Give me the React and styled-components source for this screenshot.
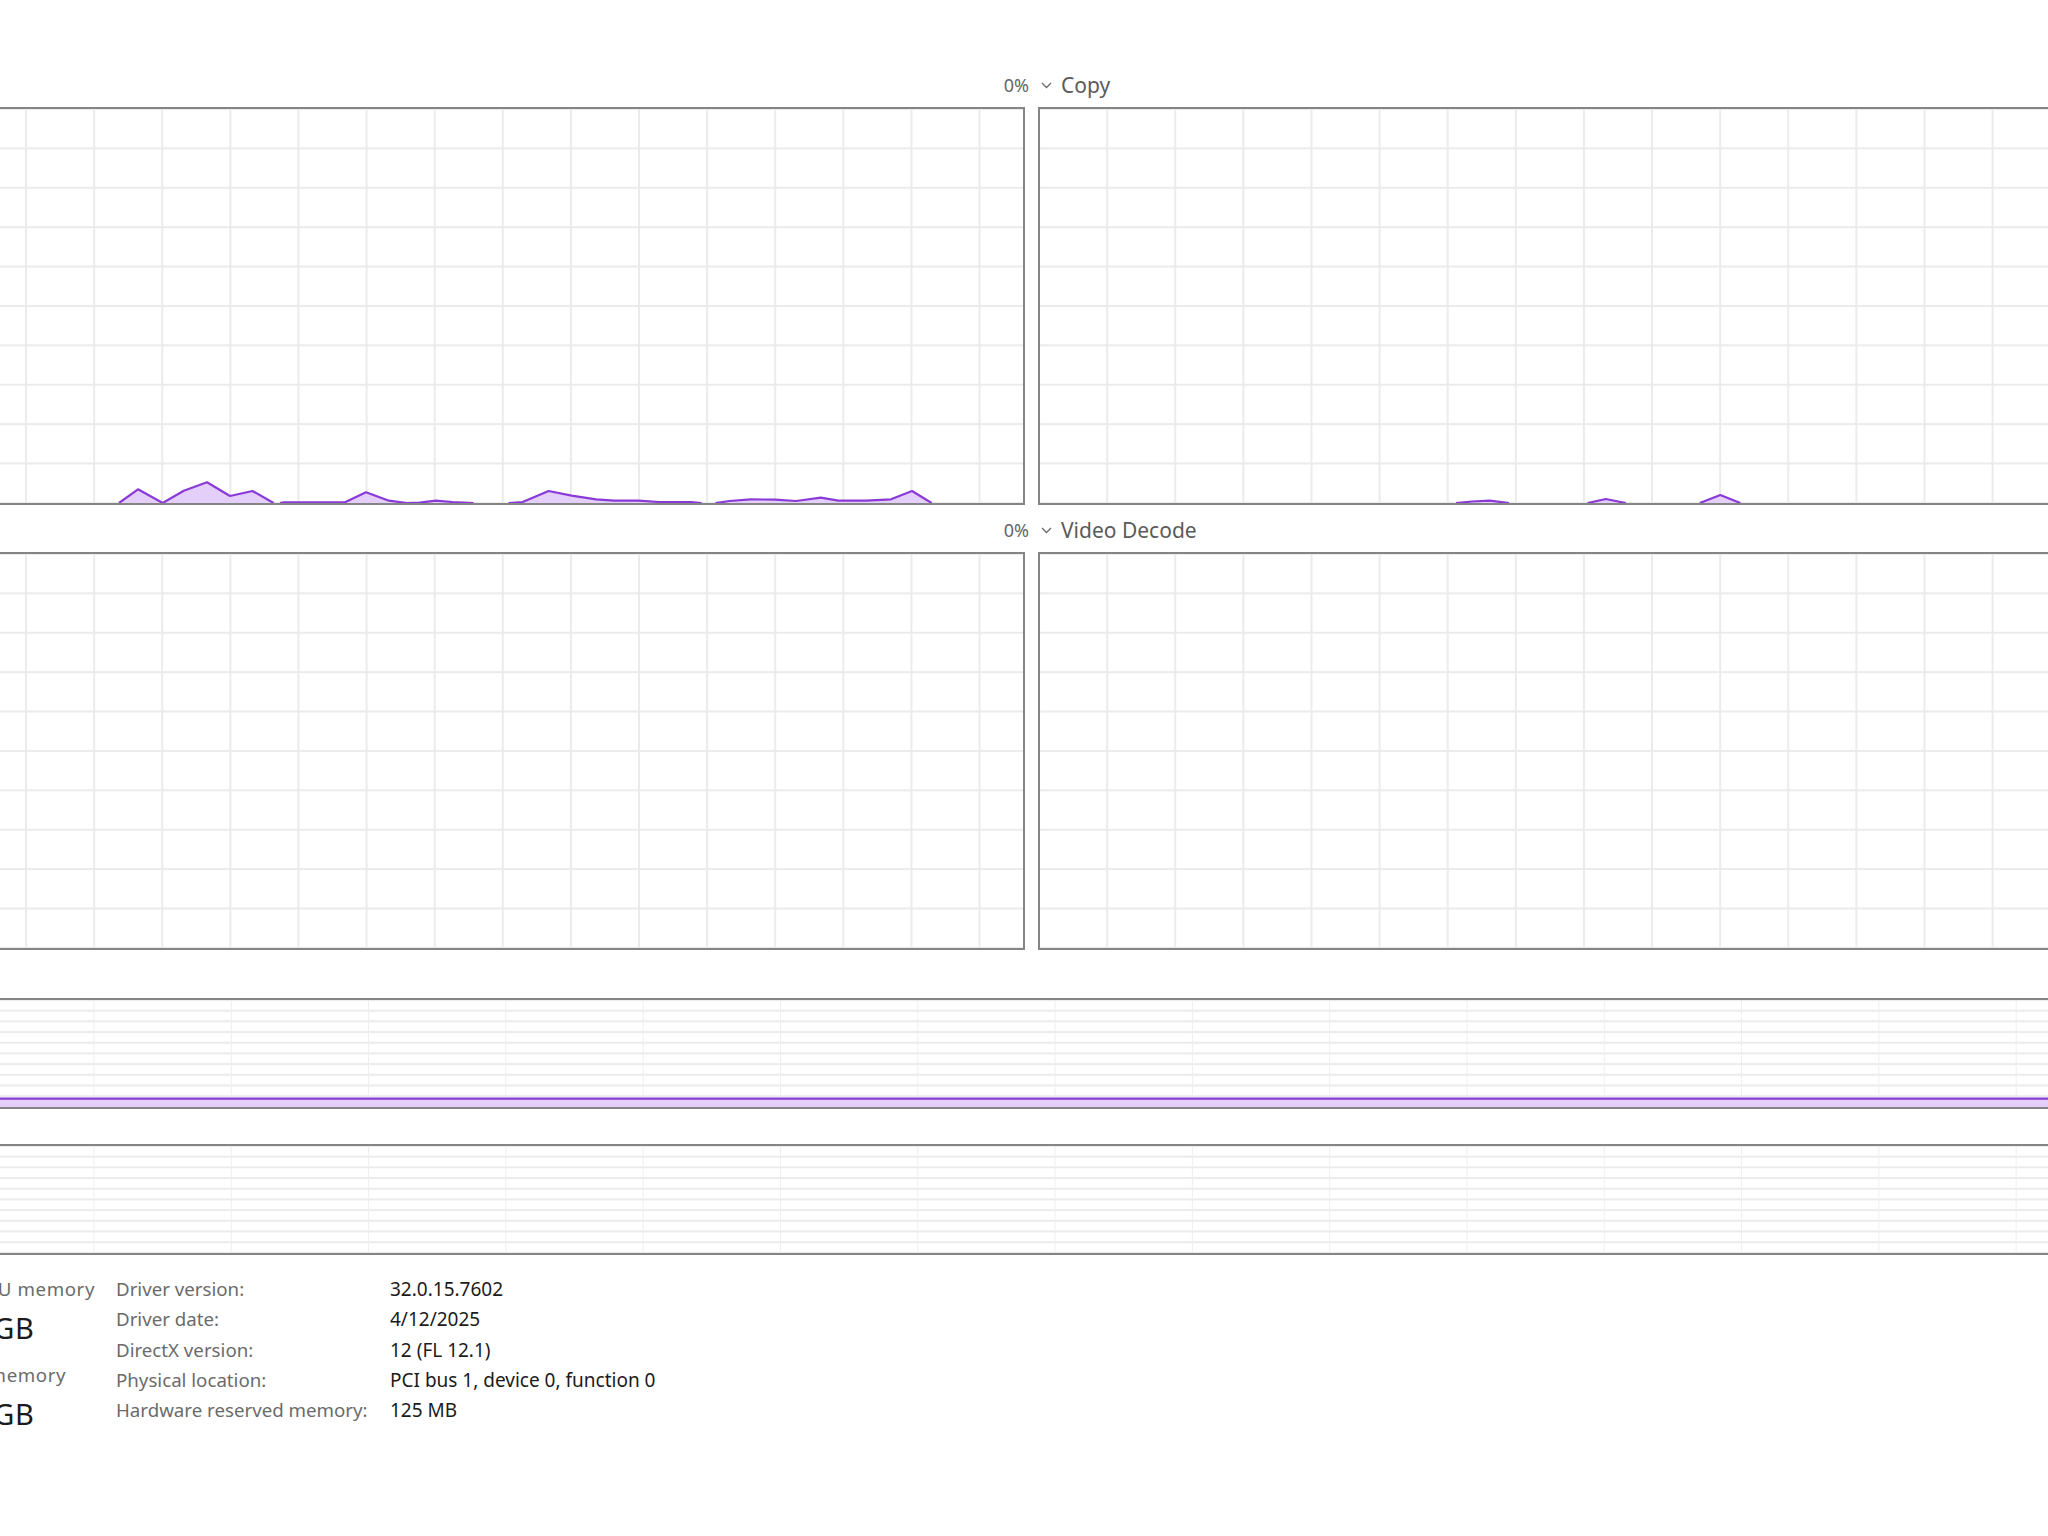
import React from "react";
import styled, { createGlobalStyle } from "styled-components";

const GlobalStyle = createGlobalStyle`
  html, body {
    margin: 0;
    padding: 0;
    background: #ffffff;
  }
  body {
    font-family: "Noto Sans", "Open Sans", sans-serif;
    color: #1b1b1b;
  }
`;

const Viewport = styled.div`
  width: 2048px;
  height: 1536px;
  overflow: hidden;
  background: #ffffff;
`;

// the panel is wider than the window, its left part is scrolled out of view
const Panel = styled.div`
  margin-left: -260px;
  width: 2583px;
  padding-top: 63px;
  display: flex;
  flex-direction: column;
`;

const EngineGrid = styled.div`
  display: grid;
  grid-template-columns: 1285px 1285px;
  column-gap: 13px;
  row-gap: 3px;
`;

const EngineCell = styled.div`
  display: flex;
  flex-direction: column;
`;

const EngineHeader = styled.div`
  height: 44px;
  display: flex;
  align-items: center;
  justify-content: space-between;
`;

const EngineName = styled.div`
  display: flex;
  align-items: center;
  gap: 9px;
  padding-left: 3px;
  font-size: 21px;
  color: #5b5b5b;
  svg {
    display: block;
  }
`;

const Percent = styled.div`
  font-size: 18px;
  color: #666666;
  margin-right: -4px;
`;

const ChartBox = styled.div`
  box-sizing: border-box;
  height: ${(p) => p.$height}px;
  border: 2px solid #858585;
  background-color: #ffffff;
  background-image: linear-gradient(
      to right,
      ${(p) => p.$vColor} ${(p) => p.$vWidth}px,
      transparent ${(p) => p.$vWidth}px
    ),
    linear-gradient(to bottom, #ebebeb 2px, transparent 2px);
  background-size: ${(p) => p.$colW}px 100%, 100% ${(p) => p.$rowH}px;
  background-position: ${(p) => p.$offX}px 0, 0 ${(p) => p.$offY}px;
  svg {
    display: block;
    width: 100%;
    height: 100%;
  }
`;

const MemSection = styled.div`
  margin-top: 13px;
  display: flex;
  flex-direction: column;
`;

const MemHeader = styled.div`
  height: 35px;
  display: flex;
  align-items: center;
  justify-content: space-between;
  font-size: 15px;
  color: #666666;
`;

const Stats = styled.div`
  margin-top: 19px;
  display: grid;
  grid-template-columns: 132px 244px 274px auto;
  align-items: start;
`;

const StatCol = styled.div`
  display: flex;
  flex-direction: column;
`;

const StatLabel = styled.div`
  font-size: 18.7px;
  letter-spacing: 0.6px;
  line-height: 30px;
  color: #6b6b6b;
  white-space: nowrap;
  margin-top: ${(p) => (p.$gap ? 8 : 0)}px;
`;

const BigValue = styled.div`
  font-size: 29px;
  letter-spacing: 0.5px;
  line-height: 48px;
  color: #1b1b1b;
  white-space: nowrap;
`;

const InfoLabel = styled.div`
  font-size: 18.7px;
  line-height: 30.25px;
  color: #6b6b6b;
  white-space: nowrap;
`;

const InfoValue = styled.div`
  font-size: 19px;
  line-height: 30.25px;
  color: #1b1b1b;
  white-space: nowrap;
`;

const PURPLE = "#8a3ad6";
const PURPLE_FILL = "#e3cffa";

const Chevron = () => (
  <svg width="11" height="7" viewBox="0 0 11 7">
    <polyline
      points="1,1 5.5,5.5 10,1"
      fill="none"
      stroke="#6a6a6a"
      strokeWidth="1.3"
    />
  </svg>
);

const leftBlobs = [
  [[157, 394], [176, 380.3], [200.7, 394], [221.8, 381.7], [245, 373.3], [268, 387], [290.5, 382], [311.6, 394]],
  [[318, 394], [322, 393.3], [383, 393.3], [404, 383.3], [427, 391.7], [445, 394], [457.5, 393.7], [474, 391.7], [490.5, 393], [511.5, 394]],
  [[546.6, 394], [560.6, 393], [586.6, 382], [609.7, 386.7], [634, 390.3], [652, 391.7], [676.4, 391.7], [697.4, 393], [729, 393], [739.5, 394]],
  [[753.5, 394], [767.6, 392], [788.6, 390.3], [813, 390.7], [834, 392], [858.8, 388.7], [876.3, 391.7], [904.4, 391.7], [929, 390.3], [950, 382], [969.6, 394]],
];

const rightBlobs = [
  [[416, 394], [432, 392.5], [449.8, 391.7], [469, 394]],
  [[547.6, 394], [565.8, 390], [585.8, 394]],
  [[659.8, 394], [680.3, 386], [700.3, 394]],
];

const shiftX = (blobs, dx) =>
  blobs.map((b) => b.map(([x, y]) => [x + dx, y]));

function AreaPlot({ width, height, blobs }) {
  return (
    <svg viewBox={`0 0 ${width} ${height}`} preserveAspectRatio="none">
      {blobs.map((pts, i) => {
        const line = pts.map(([x, y]) => `${x},${y}`).join(" ");
        return (
          <g key={i}>
            <polygon points={line} fill={PURPLE_FILL} />
            <polyline
              points={line}
              fill="none"
              stroke={PURPLE}
              strokeWidth="2.2"
              strokeLinejoin="round"
            />
          </g>
        );
      })}
    </svg>
  );
}

function EngineChart({ name, value, side, blobs }) {
  const offX = side === "left" ? 10.6 : 66.2;
  return (
    <EngineCell>
      <EngineHeader>
        <EngineName>
          <Chevron />
          <span>{name}</span>
        </EngineName>
        <Percent>{value}</Percent>
      </EngineHeader>
      <ChartBox
        $height={398}
        $colW={68.11}
        $rowH={39.4}
        $offX={offX}
        $offY={38.4}
        $vColor="#ebebeb"
        $vWidth={2}
      >
        {blobs && <AreaPlot width={1281} height={394} blobs={blobs} />}
      </ChartBox>
    </EngineCell>
  );
}

function MemoryChart({ title, total, level }) {
  const h = 107;
  const y = h * (1 - level);
  return (
    <div>
      <MemHeader>
        <span>{title}</span>
        <span>{total}</span>
      </MemHeader>
      <ChartBox
        $height={111}
        $colW={137.3}
        $rowH={10.7}
        $offX={76.9}
        $offY={9.7}
        $vColor="#eeeeee"
        $vWidth={1}
      >
        {level > 0 && (
          <svg viewBox={`0 0 2579 ${h}`} preserveAspectRatio="none">
            <rect x="0" y={y} width="2579" height={h - y} fill={PURPLE_FILL} />
            <line x1="0" y1={y} x2="2579" y2={y} stroke={PURPLE} strokeWidth="2.2" />
          </svg>
        )}
      </ChartBox>
    </div>
  );
}

const driverInfo = [
  ["Driver version:", "32.0.15.7602"],
  ["Driver date:", "4/12/2025"],
  ["DirectX version:", "12 (FL 12.1)"],
  ["Physical location:", "PCI bus 1, device 0, function 0"],
  ["Hardware reserved memory:", "125 MB"],
];

export default function App() {
  return (
    <Viewport>
      <GlobalStyle />
      <Panel>
        <EngineGrid>
          <EngineChart
            name="3D"
            value="0%"
            side="left"
            blobs={shiftX(leftBlobs, 220)}
          />
          <EngineChart name="Copy" value="0%" side="right" blobs={rightBlobs} />
          <EngineChart name="Video Encode" value="0%" side="left" />
          <EngineChart name="Video Decode" value="0%" side="right" />
        </EngineGrid>

        <MemSection>
          <MemoryChart
            title="Dedicated GPU memory usage"
            total="16.0 GB"
            level={0.078}
          />
          <MemoryChart title="Shared GPU memory usage" total="31.9 GB" level={0} />
        </MemSection>

        <Stats>
          <StatCol>
            <StatLabel>Utilization</StatLabel>
            <BigValue>1%</BigValue>
          </StatCol>
          <StatCol>
            <StatLabel>Dedicated GPU memory</StatLabel>
            <BigValue>1.2/16.0 GB</BigValue>
            <StatLabel $gap>Shared GPU memory</StatLabel>
            <BigValue>0.1/31.9 GB</BigValue>
          </StatCol>
          <StatCol>
            {driverInfo.map(([label]) => (
              <InfoLabel key={label}>{label}</InfoLabel>
            ))}
          </StatCol>
          <StatCol>
            {driverInfo.map(([label, value]) => (
              <InfoValue key={label}>{value}</InfoValue>
            ))}
          </StatCol>
        </Stats>
      </Panel>
    </Viewport>
  );
}
